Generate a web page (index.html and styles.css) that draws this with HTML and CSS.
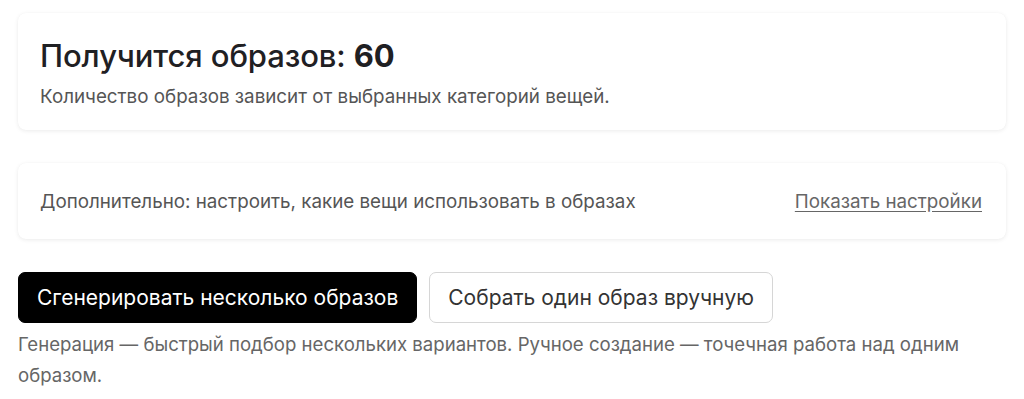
FILE: index.html
```html
<!DOCTYPE html>
<html lang="ru">
<head>
<meta charset="utf-8">
<link rel="stylesheet" href="styles.css">
</head>
<body>
<main class="page">
  <section class="card summary">
    <h1 class="title">Получится образов: <span class="count">60</span></h1>
    <p class="subtitle">Количество образов зависит от выбранных категорий вещей.</p>
  </section>
  <section class="card extra">
    <span class="extra-text">Дополнительно: настроить, какие вещи использовать в образах</span>
    <a class="extra-link" href="#">Показать настройки</a>
  </section>
  <div class="actions">
    <div class="buttons">
      <button class="btn btn-primary">Сгенерировать несколько образов</button>
      <button class="btn btn-secondary">Собрать один образ вручную</button>
    </div>
    <p class="hint">Генерация — быстрый подбор нескольких вариантов. Ручное создание — точечная работа над одним образом.</p>
  </div>
</main>
</body>
</html>
```
FILE: styles.css
```css
* { box-sizing: border-box; }
html, body { margin: 0; padding: 0; background: #fff; }
body {
  font-family: Inter, "Noto Sans", sans-serif;
  color: #1f1f1f;
}
.page {
  padding: 13px 18px 0 18px;
  display: flex;
  flex-direction: column;
  gap: 33px;
}
.card {
  background: #fff;
  border-radius: 8px;
  box-shadow: 0 1px 4px rgba(0,0,0,0.08), 0 0 1px rgba(0,0,0,0.04);
}
.summary {
  padding: 24px 22px 20px;
}
.title {
  margin: 0;
  font-size: 31px;
  line-height: 38px;
  font-weight: 500;
  color: #1f2023;
  letter-spacing: -0.1px;
}
.count { font-weight: 700; }
.subtitle {
  margin: 9px 0 0;
  font-size: 18.8px;
  line-height: 26px;
  color: #555;
}
.extra {
  padding: 26px 24px 24px 22px;
  display: flex;
  justify-content: space-between;
  align-items: center;
  font-size: 18.8px;
  line-height: 26px;
}
.extra-text { color: #555; }
.extra-link {
  color: #666;
  text-decoration: underline;
  text-underline-offset: 3px;
}
.actions {
  display: flex;
  flex-direction: column;
  gap: 6px;
}
.buttons {
  display: flex;
  gap: 12px;
}
.btn {
  font-family: inherit;
  font-size: 21px;
  line-height: 26px;
  padding: 12px 18px 11px;
  border-radius: 7px;
  cursor: pointer;
}
.btn-primary {
  background: #000;
  color: #fff;
  border: 1px solid #000;
}
.btn-secondary {
  background: #fff;
  color: #333;
  border: 1px solid #d6d6d6;
}
.hint {
  margin: 0;
  font-size: 18.6px;
  line-height: 31px;
  color: #666;
}
```
